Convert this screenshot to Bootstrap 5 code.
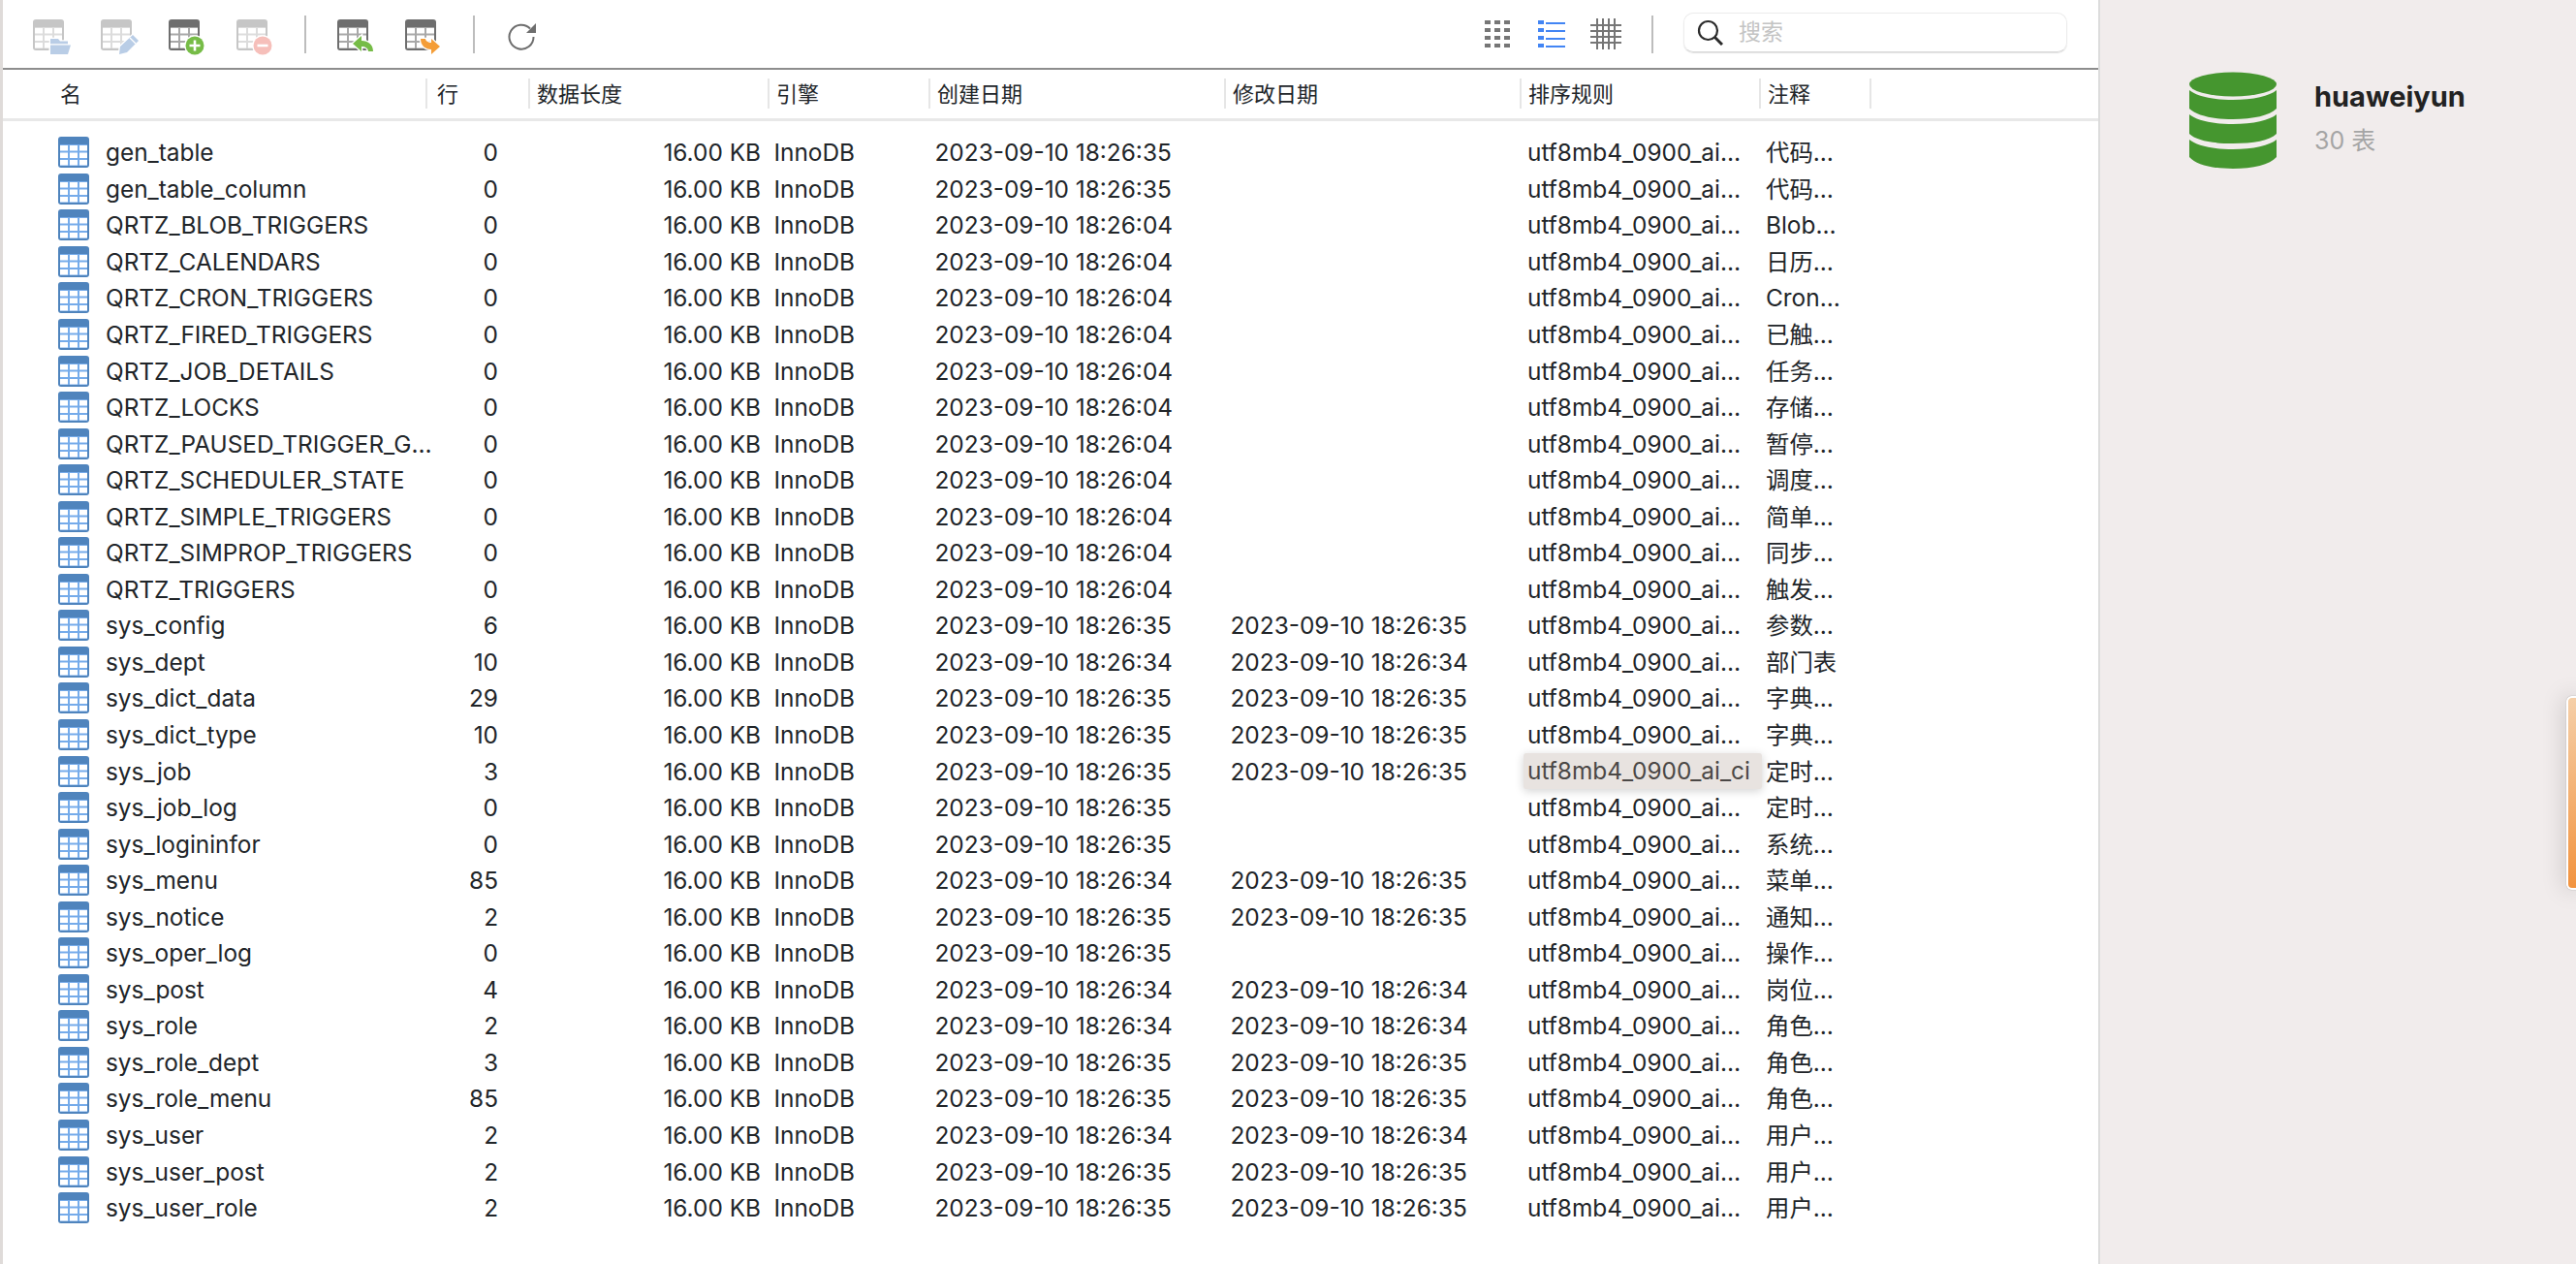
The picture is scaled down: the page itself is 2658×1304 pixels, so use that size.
<!DOCTYPE html>
<html lang="zh-CN">
<head>
  <meta charset="UTF-8">
  <meta name="viewport" content="width=device-width, initial-scale=1.0">
  <title>huaweiyun</title>
  <link href="https://cdn.jsdelivr.net/npm/bootstrap@5.3.0/dist/css/bootstrap.min.css" rel="stylesheet">
  <style>
    html, body { height: 100%; overflow: hidden; }
    body { font-family: Inter, "Noto Sans CJK SC", sans-serif; font-size: 24.4px; color: #262626; background: #fff; }
    .app-shell { height: 100vh; border-left: 3px solid #dfdbd9; }
    .main-pane { width: 2162px; flex: none; position: relative; }
    .tool-bar { height: 72px; padding-left: 31px; border-bottom: 2px solid #8d8d8d; }
    .tool-btn { display: block; flex: none; margin-top: 8px; }
    .tool-over { paint-order: stroke; stroke: #fff; stroke-width: 2.6px; }
    .tool-gap { margin-left: 30px; }
    .tool-gap-l { margin-left: 32px; }
    .tool-gap-r { margin-left: 34px; }
    .tool-sep { width: 2px; height: 39px; background: #bdbdbd; flex: none; }
    .search-box { width: 396px; height: 41px; margin-left: 31px; margin-bottom: 4px; padding-left: 13px; border: 1px solid #ececec; border-bottom-color: #d9d9d9; border-radius: 10px; box-shadow: 0 1px 1px rgba(0,0,0,.12); color: #c4c4c4; font-size: 23px; }
    .search-box svg { flex: none; }
    .view-group { margin-left: auto; margin-right: 32px; }
    .view-list { margin-left: 29px; }
    .view-table { margin-left: 26px; }
    .view-sep { margin-left: 31px; }
    .db-table { table-layout: fixed; width: 2162px; margin: 0; }
    .db-table > :not(caption) > * > * { padding: 0; border: 0; box-shadow: none; background: transparent; color: inherit; font-weight: 400; white-space: nowrap; overflow: visible; }
    .head-table { border-bottom: 3px solid #e8e8e8; font-size: 22px; }
    .head-table tr { height: 51px; }
    .head-table th { vertical-align: middle; }
    .head-table th > div { height: 31px; line-height: 32px; padding-left: 7px; border-left: 2px solid #e6e6e6; }
    .head-table th.c-name > div { border-left: 0; padding-left: 59px; }
    .head-table th.c-rows > div { padding-left: 10px; }
    .body-wrap { padding-top: 14px; }
    .body-table tr { height: 37.55px; }
    .body-table td { vertical-align: middle; line-height: 30px; }
    .c-name { width: 436px; } .c-rows { width: 106px; } .c-size { width: 247px; } .c-eng { width: 166px; }
    .c-date { width: 305px; } .c-coll { width: 247px; } .c-note { width: 114px; }
    td.c-name { padding-left: 57px !important; }
    td.c-rows { text-align: right; padding-right: 31px !important; }
    td.c-size { text-align: right; padding-right: 7px !important; }
    td.c-eng, td.c-date { padding-left: 6.5px !important; }
    td.c-coll { padding-left: 8px !important; position: relative; }
    td.c-note { padding-left: 7px !important; }
    .tbl-ico { width: 32px; height: 32px; margin-right: 17px; flex: none; }
    .coll-tip { position: absolute; left: 4px; top: 0; width: 246px; height: 37px; padding-left: 4px; line-height: 37px; background: #e8e3e0; color: #4b4846; border-radius: 3px; box-shadow: 0 2px 10px rgba(0,0,0,.18); }
    .side-pane { background: #f1ecec; border-left: 2px solid #dcdcdc; padding: 74px 0 0 92px; }
    .db-ico { width: 90px; height: 100px; flex: none; }
    .db-info { margin-left: 39px; }
    .db-title { font-size: 29px; font-weight: 700; color: #222; line-height: 32px; margin-top: 10px; }
    .db-sub { font-size: 25px; color: #a5a5a5; line-height: 32px; margin-top: 13px; }
    .edge-tab { position: absolute; right: -2px; top: 718px; width: 12px; height: 200px; border: 2px solid #fff; border-radius: 6px 0 0 6px; background: linear-gradient(#f5cfa8, #f2933f); box-shadow: 0 0 24px rgba(0,0,0,.22), 0 0 1px rgba(0,0,0,.5); }
  </style>
</head>
<body>
  <svg width="0" height="0" class="position-absolute">
    <defs>
      <symbol id="ico-table" viewBox="0 0 32 32">
        <rect width="32" height="32" rx="3" fill="#4f84bd"/>
        <rect x="2" y="8" width="28" height="22" fill="#75abea"/>
        <g fill="#fff">
          <rect x="2" y="9" width="8" height="5.5"/><rect x="12" y="9" width="8" height="5.5"/><rect x="22" y="9" width="8" height="5.5"/>
          <rect x="2" y="16.5" width="8" height="5.5"/><rect x="12" y="16.5" width="8" height="5.5"/><rect x="22" y="16.5" width="8" height="5.5"/>
          <rect x="2" y="24" width="8" height="5.5"/><rect x="12" y="24" width="8" height="5.5"/><rect x="22" y="24" width="8" height="5.5"/>
        </g>
      </symbol>
      <symbol id="tb-light" viewBox="0 0 32 32">
        <rect width="32" height="32" rx="3" fill="#c6c6c6"/>
        <rect x="2" y="8" width="28" height="22" fill="#dcdcdc"/>
        <g fill="#fff">
          <rect x="2" y="9" width="8" height="5.5"/><rect x="12" y="9" width="8" height="5.5"/><rect x="22" y="9" width="8" height="5.5"/>
          <rect x="2" y="16.5" width="8" height="5.5"/><rect x="12" y="16.5" width="8" height="5.5"/><rect x="22" y="16.5" width="8" height="5.5"/>
          <rect x="2" y="24" width="8" height="5.5"/><rect x="12" y="24" width="8" height="5.5"/><rect x="22" y="24" width="8" height="5.5"/>
        </g>
      </symbol>
      <symbol id="tb-dark" viewBox="0 0 32 32">
        <rect width="32" height="32" rx="3" fill="#6e6e6e"/>
        <rect x="2" y="8" width="28" height="22" fill="#a8a8a8"/>
        <g fill="#fff">
          <rect x="2" y="9" width="8" height="5.5"/><rect x="12" y="9" width="8" height="5.5"/><rect x="22" y="9" width="8" height="5.5"/>
          <rect x="2" y="16.5" width="8" height="5.5"/><rect x="12" y="16.5" width="8" height="5.5"/><rect x="22" y="16.5" width="8" height="5.5"/>
          <rect x="2" y="24" width="8" height="5.5"/><rect x="12" y="24" width="8" height="5.5"/><rect x="22" y="24" width="8" height="5.5"/>
        </g>
      </symbol>
    </defs>
  </svg>

  <div class="app-shell d-flex">
    <div class="main-pane">
      <!-- toolbar -->
      <div class="tool-bar d-flex align-items-center">
        <svg class="tool-btn" width="40" height="38" viewBox="0 0 40 38"><use href="#tb-light" width="32" height="32"/><path class="tool-over" d="M18 20h8l2 2.500h8V36H18z" fill="#b9cde6"/><path class="tool-over" d="M18 26.500h21L36 36H18z" fill="#b9cde6"/></svg>
        <svg class="tool-btn tool-gap" width="40" height="38" viewBox="0 0 40 38"><use href="#tb-light" width="32" height="32"/><path class="tool-over" d="M19 36l1-8 13-12 6 6-12 12z" fill="#b9cde6"/><path d="M30 19l6 6" stroke="#fff" stroke-width="1.3"/></svg>
        <svg class="tool-btn tool-gap" width="40" height="38" viewBox="0 0 40 38"><use href="#tb-dark" width="32" height="32"/><circle class="tool-over" cx="27" cy="27" r="9.500" fill="#76bc47"/><path d="M27 21.500v11M21.500 27h11" stroke="#fff" stroke-width="2.600"/></svg>
        <svg class="tool-btn tool-gap" width="40" height="38" viewBox="0 0 40 38"><use href="#tb-light" width="32" height="32"/><circle class="tool-over" cx="27" cy="27" r="9.500" fill="#f6bfba"/><path d="M21.500 27h11" stroke="#fff" stroke-width="2.600"/></svg>
        <div class="tool-sep tool-gap"></div>
        <svg class="tool-btn tool-gap-l" width="40" height="38" viewBox="0 0 40 38"><use href="#tb-dark" width="32" height="32"/><path class="tool-over" d="M16 25l9-8v5c7 0 12 4 12 11h-5c0-3-3-5-7-5v5z" fill="#76bc47"/></svg>
        <svg class="tool-btn tool-gap" width="40" height="38" viewBox="0 0 40 38"><use href="#tb-dark" width="32" height="32"/><path class="tool-over" d="M16 20h5c0 2 3 4 6 4v-4l9 8-9 8v-5c-6 0-11-4-11-11z" fill="#f49d37"/></svg>
        <div class="tool-sep tool-gap"></div>
        <svg class="tool-btn tool-gap-r" width="32" height="32" viewBox="0 0 32 32"><path d="M23 6.500A12.500 12.500 0 1 0 26.500 15" fill="none" stroke="#6e6e6e" stroke-width="2"/><path d="M29 1v10H19z" fill="#6e6e6e"/></svg>

        <div class="view-group d-flex align-items-center">
          <svg width="26" height="28" viewBox="0 0 26 28" fill="#767676"><path d="M0 0h6v4H0zM10 0h6v4h-6zM20 0h6v4h-6zM0 8h6v4H0zM10 8h6v4h-6zM20 8h6v4h-6zM0 16h6v4H0zM10 16h6v4h-6zM20 16h6v4h-6zM0 24h6v4H0zM10 24h6v4h-6zM20 24h6v4h-6z"/></svg>
          <svg class="view-list" width="28" height="28" viewBox="0 0 28 28" fill="#4285f4"><path d="M0 0h6v4H0zM0 8h6v4H0zM0 16h6v4H0zM0 24h6v4H0z"/><path d="M8 2h20v2H8zM8 10h20v2H8zM8 18h20v2H8zM8 26h20v2H8z"/></svg>
          <svg class="view-table" width="32" height="32" viewBox="0 0 32 32" fill="none" stroke="#767676" stroke-width="2"><path d="M7 0v32M13 0v32M19 0v32M25 0v32M0 7h32M0 13h32M0 19h32M0 25h32"/></svg>
          <div class="tool-sep view-sep"></div>
          <div class="search-box d-flex align-items-center">
            <svg class="me-3" width="27" height="27" viewBox="0 0 27 27" fill="none" stroke="#2b2b2b" stroke-width="2.200"><circle cx="11.500" cy="11.500" r="9.500"/><path d="M18 18l8 8" stroke-width="3"/></svg>
            <span>搜索</span>
          </div>
        </div>
      </div>

      <!-- column headers -->
      <table class="table db-table head-table">
        <thead>
          <tr>
            <th class="c-name"><div>名</div></th><th class="c-rows"><div>行</div></th><th class="c-size"><div>数据长度</div></th><th class="c-eng"><div>引擎</div></th><th class="c-date"><div>创建日期</div></th><th class="c-date"><div>修改日期</div></th><th class="c-coll"><div>排序规则</div></th><th class="c-note"><div>注释</div></th><th><div></div></th>
          </tr>
        </thead>
      </table>

      <!-- table rows -->
      <div class="body-wrap">
        <table class="table db-table body-table">
          <colgroup><col class="c-name"><col class="c-rows"><col class="c-size"><col class="c-eng"><col class="c-date"><col class="c-date"><col class="c-coll"><col class="c-note"><col></colgroup>
          <tbody id="rows"></tbody>
        </table>
      </div>
    </div>

    <!-- info sidebar -->
    <div class="side-pane flex-grow-1 d-flex align-items-start">
      <svg class="db-ico" viewBox="0 0 90 100" fill="#45962f">
        <ellipse cx="45" cy="13" rx="45" ry="12.500"/>
        <path d="M0 19c7 6 24 10 45 10s38-4 45-10v19c-7 7-24 11-45 11S7 45 0 38z"/>
        <path d="M0 44c7 6 24 10 45 10s38-4 45-10v20c-7 7-24 10-45 10S7 71 0 64z"/>
        <path d="M0 70c7 6 24 10 45 10s38-4 45-10v18c-7 8-24 12-45 12S7 96 0 88z"/>
      </svg>
      <div class="db-info">
        <div class="db-title">huaweiyun</div>
        <div class="db-sub">30 表</div>
      </div>
    </div>
    <div class="edge-tab"></div>
  </div>

  <script src="https://cdn.jsdelivr.net/npm/bootstrap@5.3.0/dist/js/bootstrap.bundle.min.js"></script>
  <script>
    // name, rows, created, modified, comment
    const rows = [
      ["gen_table", 0, "35", "", "代码…"],
      ["gen_table_column", 0, "35", "", "代码…"],
      ["QRTZ_BLOB_TRIGGERS", 0, "04", "", "Blob…"],
      ["QRTZ_CALENDARS", 0, "04", "", "日历…"],
      ["QRTZ_CRON_TRIGGERS", 0, "04", "", "Cron…"],
      ["QRTZ_FIRED_TRIGGERS", 0, "04", "", "已触…"],
      ["QRTZ_JOB_DETAILS", 0, "04", "", "任务…"],
      ["QRTZ_LOCKS", 0, "04", "", "存储…"],
      ["QRTZ_PAUSED_TRIGGER_G…", 0, "04", "", "暂停…"],
      ["QRTZ_SCHEDULER_STATE", 0, "04", "", "调度…"],
      ["QRTZ_SIMPLE_TRIGGERS", 0, "04", "", "简单…"],
      ["QRTZ_SIMPROP_TRIGGERS", 0, "04", "", "同步…"],
      ["QRTZ_TRIGGERS", 0, "04", "", "触发…"],
      ["sys_config", 6, "35", "35", "参数…"],
      ["sys_dept", 10, "34", "34", "部门表"],
      ["sys_dict_data", 29, "35", "35", "字典…"],
      ["sys_dict_type", 10, "35", "35", "字典…"],
      ["sys_job", 3, "35", "35", "定时…"],
      ["sys_job_log", 0, "35", "", "定时…"],
      ["sys_logininfor", 0, "35", "", "系统…"],
      ["sys_menu", 85, "34", "35", "菜单…"],
      ["sys_notice", 2, "35", "35", "通知…"],
      ["sys_oper_log", 0, "35", "", "操作…"],
      ["sys_post", 4, "34", "34", "岗位…"],
      ["sys_role", 2, "34", "34", "角色…"],
      ["sys_role_dept", 3, "35", "35", "角色…"],
      ["sys_role_menu", 85, "35", "35", "角色…"],
      ["sys_user", 2, "34", "34", "用户…"],
      ["sys_user_post", 2, "35", "35", "用户…"],
      ["sys_user_role", 2, "35", "35", "用户…"]
    ];
    const stamp = s => s ? "2023-09-10 18:26:" + s : "";
    document.getElementById("rows").innerHTML = rows.map(r => {
      // the hovered row shows the full collation in a tooltip over the cell
      const coll = r[0] === "sys_job" ? '<div class="coll-tip">utf8mb4_0900_ai_ci</div>' : "utf8mb4_0900_ai…";
      return `<tr><td class="c-name"><div class="d-flex align-items-center"><svg class="tbl-ico"><use href="#ico-table"/></svg><span>${r[0]}</span></div></td>` +
        `<td class="c-rows">${r[1]}</td><td class="c-size">16.00 KB</td><td class="c-eng">InnoDB</td>` +
        `<td class="c-date">${stamp(r[2])}</td><td class="c-date">${stamp(r[3])}</td>` +
        `<td class="c-coll">${coll}</td><td class="c-note">${r[4]}</td><td></td></tr>`;
    }).join("");
  </script>
</body>
</html>
